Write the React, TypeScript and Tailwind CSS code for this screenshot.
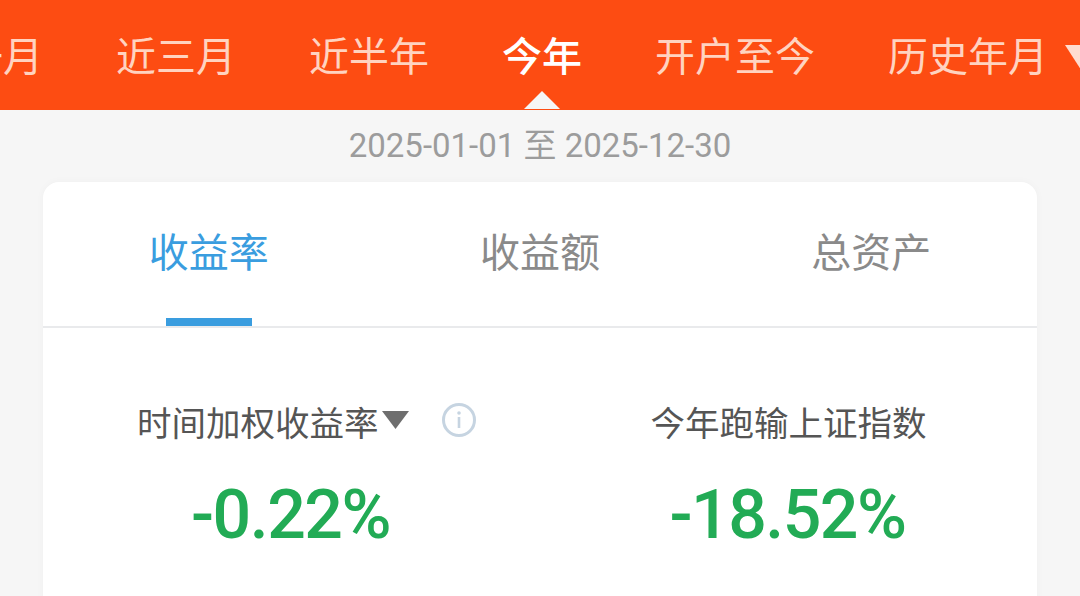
import React from 'react';

const cjk = "font-['Roboto','Noto_Sans_CJK_SC',sans-serif]";

const periods = ['近一月', '近三月', '近半年', '今年', '开户至今', '历史年月'];
const tabs = ['收益率', '收益额', '总资产'];

const PeriodBar: React.FC = () => (
  <header className="h-[110px] bg-[#fd4c12] overflow-hidden flex items-center pt-[6px]">
    <div className="flex items-center gap-[73px] -ml-[77px] shrink-0">
      {periods.map((p) => {
        const active = p === '今年';
        return (
          <div key={p} className="relative shrink-0 flex items-center">
            <span className={`text-[40px] leading-[48px] whitespace-nowrap ${active ? 'text-white font-medium' : 'text-[#ffd3c0]'}`}>{p}</span>
            {active && (
              <svg className="absolute left-1/2 -translate-x-1/2 top-[56px]" width="38" height="19" viewBox="0 0 38 19">
                <path d="M19 1 L37 19 L1 19 Z" fill="#f6f6f6" />
              </svg>
            )}
            {p === '历史年月' && (
              <svg className="absolute left-[177px] top-[11px]" width="36" height="28" viewBox="0 0 36 28">
                <path d="M0 0 L36 0 L18 28 Z" fill="#ffdccf" />
              </svg>
            )}
          </div>
        );
      })}
    </div>
  </header>
);

const Metric: React.FC<{ value: string; children: React.ReactNode }> = ({ value, children }) => (
  <div className="flex flex-col">
    {children}
    <div className="mt-[29px] pr-[2px] text-center text-[68px] leading-[80px] tracking-[-1.5px] font-medium text-[#22ab55]">{value}</div>
  </div>
);

export default function App() {
  return (
    <div className={`w-[1080px] h-[596px] overflow-hidden bg-[#f6f6f6] ${cjk}`}>
      <PeriodBar />
      <div className="h-[72px] flex items-start justify-center pt-[16px] text-[33px] leading-[40px] text-[#9c9c9c] whitespace-nowrap">
        2025-01-01 至 2025-12-30
      </div>
      <main className="mx-[43px] h-[500px] bg-white rounded-t-[16px] shadow-[0_0_8px_rgba(0,0,0,0.03)]">
        <nav className="grid grid-cols-3 h-[146px] border-b-2 border-[#e9eaec]">
          {tabs.map((t, i) => (
            <div key={t} className="relative flex items-start justify-center pt-[48px]">
              <span className={`text-[40px] leading-[48px] ${i === 0 ? 'text-[#3a9ddf]' : 'text-[#8a8a8a]'}`}>{t}</span>
              {i === 0 && <div className="absolute bottom-0 left-1/2 -translate-x-1/2 w-[86px] h-[8px] bg-[#3a9ddf]" />}
            </div>
          ))}
        </nav>
        <section className="grid grid-cols-2 pt-[74px]">
          <Metric value="-0.22%">
            <div className="flex items-center pl-[94px] h-[44px]">
              <span className="text-[34.5px] leading-[44px] text-[#555] whitespace-nowrap">时间加权收益率</span>
              <svg className="ml-[3px] -mt-[8px]" width="27" height="18" viewBox="0 0 27 18">
                <path d="M0 0 L27 0 L13.5 18 Z" fill="#6e6e6e" />
              </svg>
              <svg className="ml-[33px] -mt-[9px]" width="34" height="34" viewBox="0 0 34 34" fill="none">
                <circle cx="17" cy="17" r="15.5" stroke="#c6d4e1" strokeWidth="3" />
                <circle cx="17" cy="10" r="1.8" fill="#c6d4e1" />
                <rect x="15.7" y="14" width="2.6" height="11" fill="#c6d4e1" />
              </svg>
            </div>
          </Metric>
          <Metric value="-18.52%">
            <div className="flex items-center justify-center h-[44px]">
              <span className="text-[34.5px] leading-[44px] text-[#555] whitespace-nowrap">今年跑输上证指数</span>
            </div>
          </Metric>
        </section>
      </main>
    </div>
  );
}
